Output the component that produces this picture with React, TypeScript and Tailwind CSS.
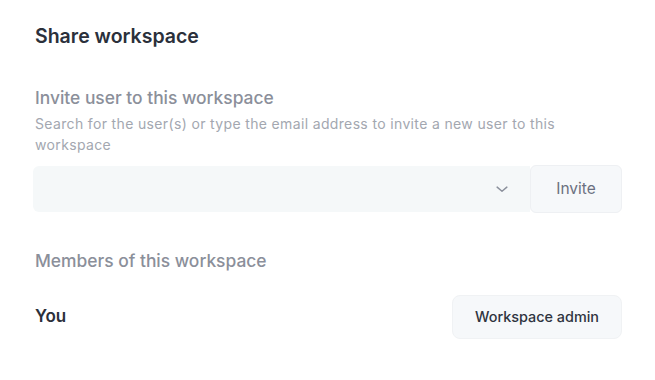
import React from 'react';

const ChevronDown = () => (
  <svg width="18" height="18" viewBox="0 0 24 24" fill="none" stroke="#8b909c" strokeWidth="1.9" strokeLinecap="round" strokeLinejoin="round">
    <path d="M5.5 9.5l6.5 5.5 6.5-5.5" />
  </svg>
);

export default function App() {
  return (
    <div className="w-[655px] h-[380px] bg-white" style={{ fontFamily: 'Inter, "Noto Sans", sans-serif' }}>
      <div className="pl-[35px] pr-[33px] pt-[25px]">
        <h2 className="text-[19.5px] leading-[22px] font-semibold text-[#2b303b]">Share workspace</h2>

        {/* Invite */}
        <div className="mt-[41px]">
          <p className="text-[17.4px] leading-[20px] font-medium text-[#8b8f9a]">Invite user to this workspace</p>
          <p className="mt-[5px] text-[14px] leading-[21px] tracking-[0.35px] text-[#a3a7b0] pr-[20px]">
            Search for the user(s) or type the email address to invite a new user to this workspace
          </p>
          <div className="mt-[11px] -ml-[2px] flex items-stretch">
            <div className="flex-1 h-[46px] bg-[#f5f8f9] rounded-l-[6px] flex items-center justify-end pr-[19px]">
              <ChevronDown />
            </div>
            <button className="w-[92px] h-[48px] -mt-[1px] bg-[#f6f8fa] border border-[#eef0f3] rounded-[6px] text-[15.5px] text-[#6b7080]">
              Invite
            </button>
          </div>
        </div>

        {/* Members */}
        <div className="mt-[38px]">
          <p className="text-[17.4px] leading-[20px] font-medium text-[#8b8f9a]">Members of this workspace</p>
          <div className="mt-[24px] flex items-center justify-between">
            <span className="text-[17px] font-semibold text-[#2b303b]">You</span>
            <button className="w-[170px] h-[44px] bg-[#f6f8fa] border border-[#f0f2f4] rounded-[8px] text-[14.4px] font-medium text-[#2f3440]">
              Workspace admin
            </button>
          </div>
        </div>
      </div>
    </div>
  );
}
